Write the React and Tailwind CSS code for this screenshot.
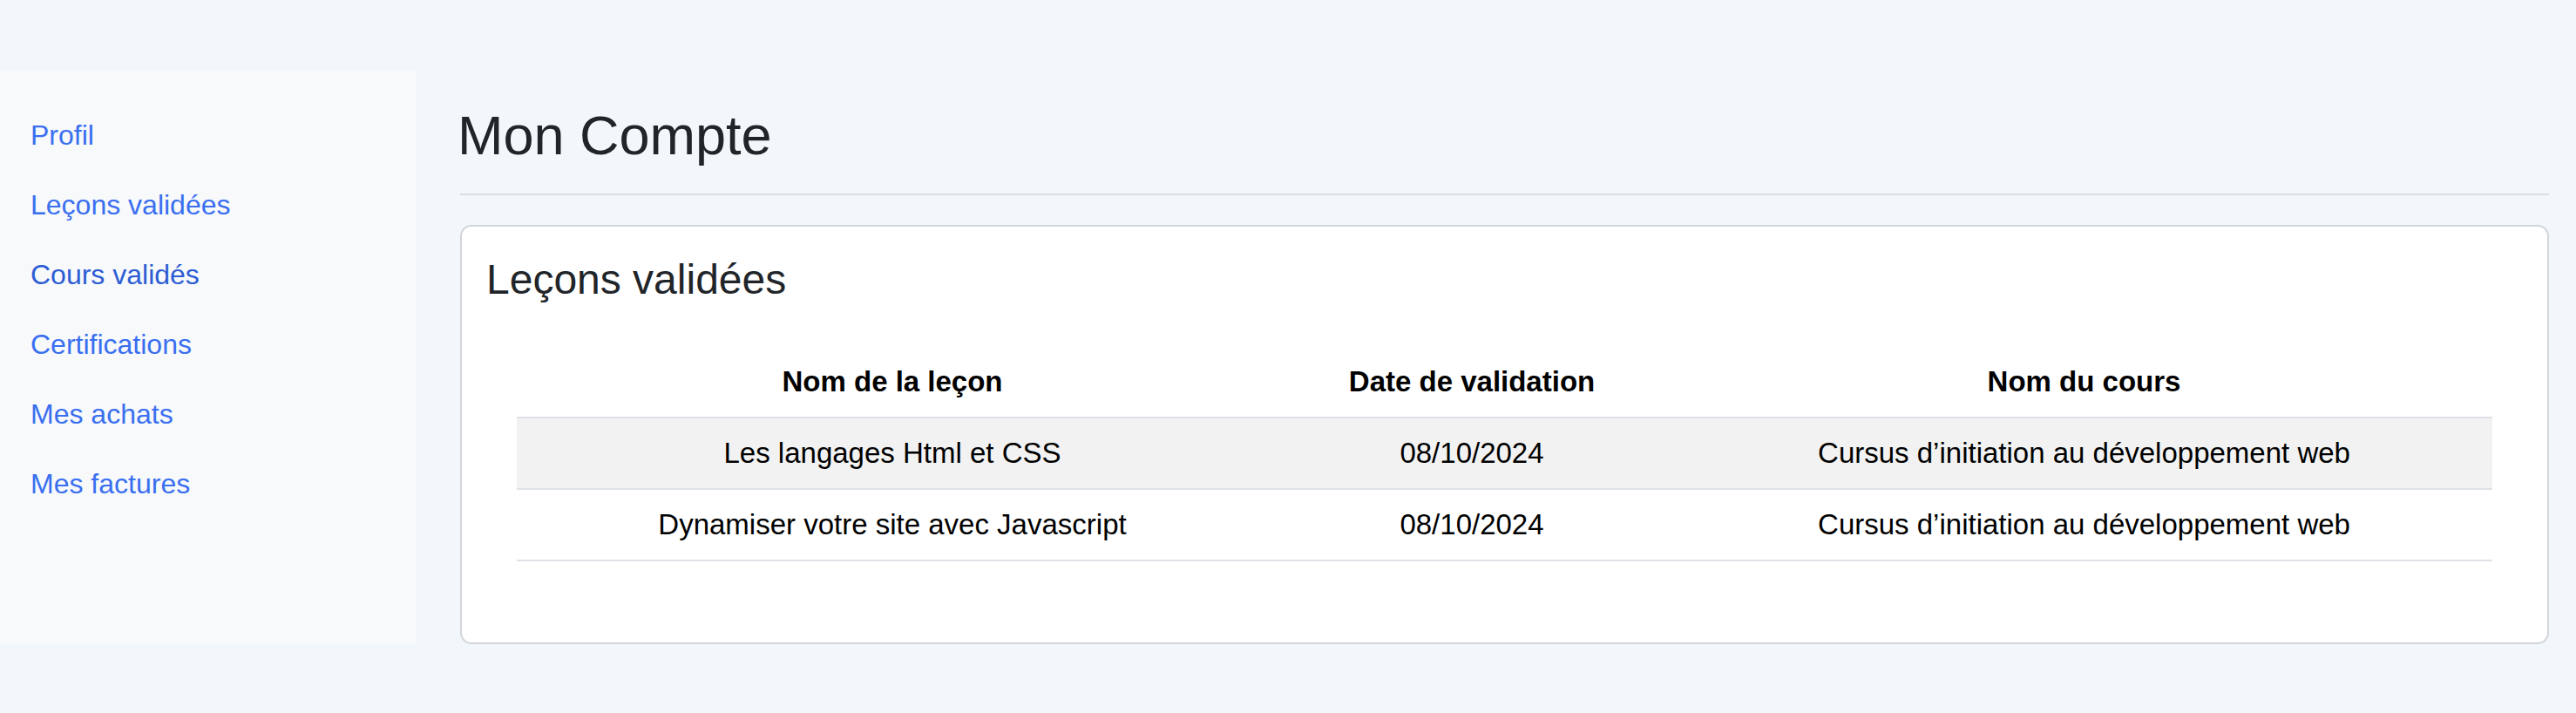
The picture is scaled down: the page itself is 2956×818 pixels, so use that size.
import React from "react";

const navItems = [
  { label: "Profil" },
  { label: "Leçons validées" },
  { label: "Cours validés", active: true },
  { label: "Certifications" },
  { label: "Mes achats" },
  { label: "Mes factures" },
];

const lessons = [
  {
    name: "Les langages Html et CSS",
    date: "08/10/2024",
    course: "Cursus d’initiation au développement web",
  },
  {
    name: "Dynamiser votre site avec Javascript",
    date: "08/10/2024",
    course: "Cursus d’initiation au développement web",
  },
];

function Sidebar() {
  return (
    <aside className="w-[478px] h-[658px] shrink-0 bg-[#f7f9fb] pt-[34px] pl-[35px]">
      {navItems.map((item) => (
        <a
          key={item.label}
          href="#"
          className={`block h-[80px] leading-[80px] text-[32px] ${
            item.active ? "text-[#2d5dd4]" : "text-[#3a6ff0]"
          }`}
        >
          {item.label}
        </a>
      ))}
    </aside>
  );
}

function LessonsCard() {
  return (
    <div className="mt-[34px] h-[481px] bg-white border-2 border-[#d3d5d8] rounded-[13px] pt-[31px] px-[28px]">
      <h3 className="text-[48px] leading-[60px] text-[#212529]">Leçons validées</h3>

      <div className="mt-[46px] mx-[35px]">
        <table className="w-full border-collapse text-[33px] text-black">
          <thead>
            <tr>
              <th className="w-[862px] h-[82px] font-bold border-b-2 border-[#dee2e6]">
                Nom de la leçon
              </th>
              <th className="w-[468px] h-[82px] font-bold border-b-2 border-[#dee2e6]">
                Date de validation
              </th>
              <th className="h-[82px] font-bold border-b-2 border-[#dee2e6]">
                Nom du cours
              </th>
            </tr>
          </thead>
          <tbody>
            {lessons.map((l, i) => (
              <tr key={i} className={i % 2 === 0 ? "bg-[#f2f2f2]" : "bg-white"}>
                <td className="h-[82px] text-center border-b-2 border-[#dee2e6]">{l.name}</td>
                <td className="h-[82px] text-center border-b-2 border-[#dee2e6]">{l.date}</td>
                <td className="h-[82px] text-center border-b-2 border-[#dee2e6]">{l.course}</td>
              </tr>
            ))}
          </tbody>
        </table>
      </div>
    </div>
  );
}

export default function App() {
  return (
    <div className="min-h-screen bg-[#f2f7fb] pt-[81px] font-['Comic_Sans_MS','Liberation_Sans',sans-serif]">
      <div className="flex">
        <Sidebar />

        {/* MAIN */}
        <main className="flex-1 pl-[50px] pr-[31px] pt-[34px]">
          <h1 className="h-[80px] leading-[80px] text-[63px] text-[#212529] -ml-[3px]">
            Mon Compte
          </h1>
          <div className="mt-[27px] h-[2px] bg-[#dadde1]" />
          <LessonsCard />
        </main>
      </div>
    </div>
  );
}
